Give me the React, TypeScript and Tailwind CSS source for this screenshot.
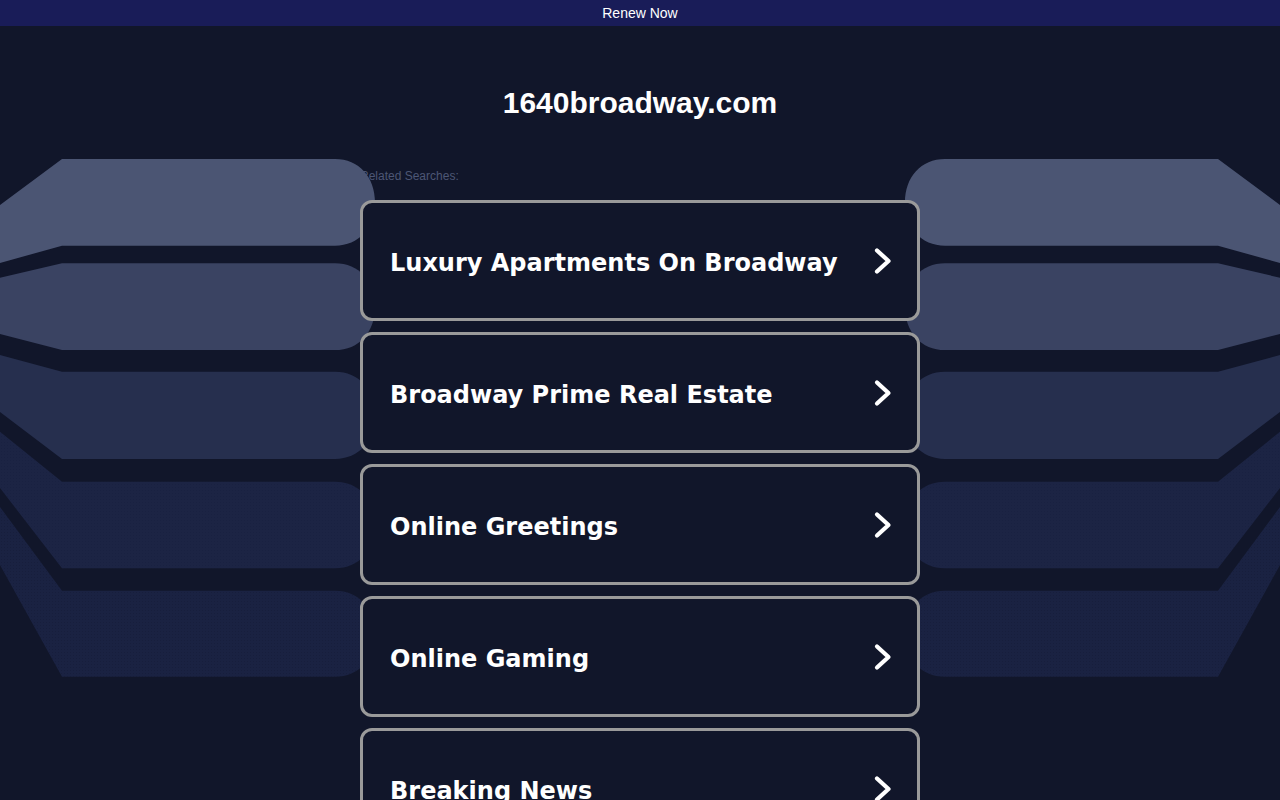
import React from "react";

type Band = { top: number; bottom: number; lt: number; lb: number; fill: string };

const bands: Band[] = [
  { top: 159, bottom: 245.7, lt: 205, lb: 263, fill: "#4b5573" },
  { top: 263.3, bottom: 350, lt: 277.7, lb: 334, fill: "#3a4362" },
  { top: 371.7, bottom: 459, lt: 355, lb: 412, fill: "#262f4e" },
  { top: 481.7, bottom: 568.3, lt: 431.7, lb: 488, fill: "url(#dots4)" },
  { top: 590.7, bottom: 676.7, lt: 507, lb: 565, fill: "url(#dots5)" },
];

function bandPath(b: Band) {
  const mid = (b.top + b.bottom) / 2;
  return `M0,${b.lt} L62,${b.top} L335,${b.top} C359,${b.top} 375,${b.top + 18} 375,${mid} C375,${b.bottom - 18} 359,${b.bottom} 335,${b.bottom} L62,${b.bottom} L0,${b.lb} Z`;
}

function Background() {
  return (
    <svg
      className="absolute left-0 top-0 pointer-events-none"
      width={1280}
      height={800}
      viewBox="0 0 1280 800"
    >
      <defs>
        <pattern id="dots4" width="3" height="3" patternUnits="userSpaceOnUse">
          <rect width="3" height="3" fill="#1c2444" />
          <circle cx="1.5" cy="1.5" r="0.5" fill="#172040" />
        </pattern>
        <pattern id="dots5" width="3" height="3" patternUnits="userSpaceOnUse">
          <rect width="3" height="3" fill="#1a2242" />
          <circle cx="1.5" cy="1.5" r="0.5" fill="#151c3a" />
        </pattern>
      </defs>
      <g>
        {bands.map((b, i) => (
          <path key={i} d={bandPath(b)} fill={b.fill} />
        ))}
      </g>
      <g transform="translate(1280,0) scale(-1,1)">
        {bands.map((b, i) => (
          <path key={i} d={bandPath(b)} fill={b.fill} />
        ))}
      </g>
    </svg>
  );
}

function Chevron() {
  return (
    <svg width="20" height="28" viewBox="0 0 20 28" className="shrink-0">
      <polyline
        points="4,3.5 15.5,14 4,24.5"
        fill="none"
        stroke="#ffffff"
        strokeWidth="4.2"
        strokeLinecap="round"
        strokeLinejoin="round"
      />
    </svg>
  );
}

const items = [
  "Luxury Apartments On Broadway",
  "Broadway Prime Real Estate",
  "Online Greetings",
  "Online Gaming",
  "Breaking News",
];

export default function App() {
  return (
    <div className="relative min-h-screen w-full overflow-hidden bg-[#11162a]" style={{ height: 800 }}>
      <div className="relative z-20 flex h-[26px] items-center justify-center bg-[#191c58] text-[14px] text-white [font-family:'Liberation_Sans',Arial,sans-serif]">
        Renew Now
      </div>
      <div className="relative">
        <div className="relative z-0 mx-auto w-[560px] pt-[142px]">
          <div className="h-[16px] text-[12px] leading-[16px] text-[#4d5675] [font-family:'Liberation_Sans',Arial,sans-serif]">
            Related Searches:
          </div>
        </div>
        <div className="absolute left-0 top-[-26px]">
          <Background />
        </div>
        <div className="absolute left-0 right-0 top-[59px] text-center text-[30px] font-bold leading-[36px] text-white [font-family:'Liberation_Sans',Arial,sans-serif]">
          1640broadway.com
        </div>
        <div className="relative z-10 mx-auto mt-[16px] flex w-[560px] flex-col gap-[11px]">
          {items.map((t) => (
            <div
              key={t}
              className="flex h-[121px] items-center justify-between rounded-[12px] border-[3px] border-[#9a9a9a] bg-[#11162a] pl-[27px] pr-[24px]"
            >
              <span className="mt-[4px] text-[24px] font-bold text-white [font-family:'DejaVu_Sans',Verdana,sans-serif]">
                {t}
              </span>
              <Chevron />
            </div>
          ))}
        </div>
      </div>
    </div>
  );
}
